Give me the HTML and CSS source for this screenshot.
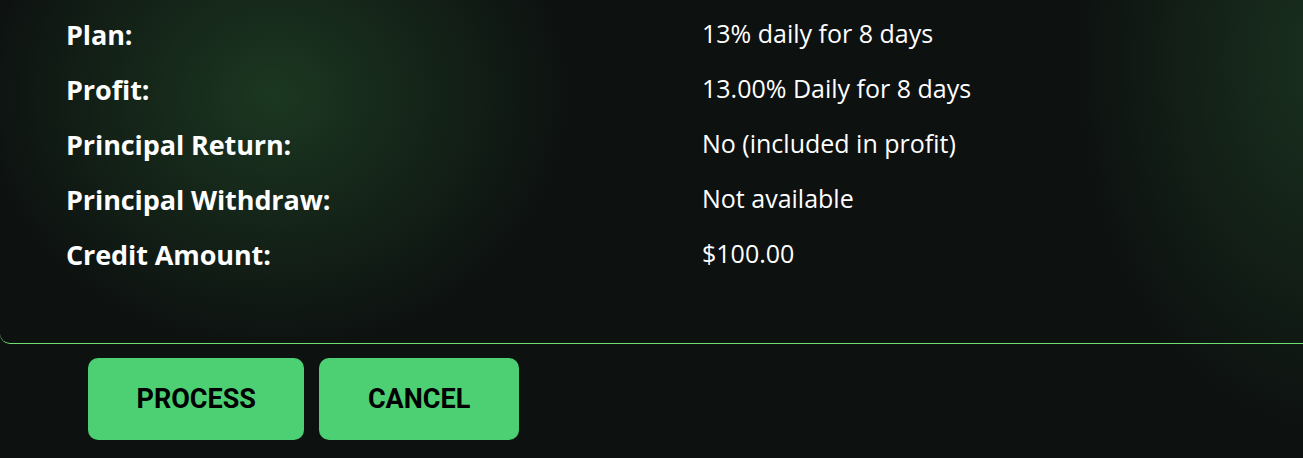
FILE: index.html
```html
<!DOCTYPE html>
<html>
<head>
    <meta charset="utf-8" />
    <title>Confirm Deposit</title>
    <link rel="stylesheet" href="styles.css">
</head>
<body>
<div class="confirm_card">
    <div class="confirm_row">
        <div class="confirm_label">Plan:</div>
        <div class="confirm_value">13% daily for 8 days</div>
    </div>
    <div class="confirm_row">
        <div class="confirm_label">Profit:</div>
        <div class="confirm_value">13.00% Daily for 8 days</div>
    </div>
    <div class="confirm_row">
        <div class="confirm_label">Principal Return:</div>
        <div class="confirm_value">No (included in profit)</div>
    </div>
    <div class="confirm_row">
        <div class="confirm_label">Principal Withdraw:</div>
        <div class="confirm_value">Not available</div>
    </div>
    <div class="confirm_row">
        <div class="confirm_label">Credit Amount:</div>
        <div class="confirm_value">$100.00</div>
    </div>
</div>

<div class="confirm_actions">
    <button class="btn_green" type="button">Process</button>
    <button class="btn_green" type="button">Cancel</button>
</div>
</body>
</html>
```

FILE: styles.css
```css
html {
    background: #0d1110;
}

body {
    margin: 0;
    min-height: 458px;
    color: #fff;
    font-family: "Open Sans", "Noto Sans", sans-serif;
    background:
        radial-gradient(ellipse 260px 380px at 1330px 60px, rgba(30, 60, 36, 0.75), rgba(30, 60, 36, 0) 100%),
        #0d1110;
    overflow: hidden;
}

.confirm_card {
    box-sizing: border-box;
    width: 100%;
    padding: 6px 0 62px 66px;
    border-bottom: 1px solid #6ee070;
    border-bottom-left-radius: 10px;
    background: radial-gradient(ellipse 300px 260px at 275px 95px, rgba(30, 62, 36, 0.85), rgba(30, 62, 36, 0) 100%);
}

.confirm_row {
    display: grid;
    grid-template-columns: 636px 1fr;
    height: 55px;
    align-items: center;
}

.confirm_label {
    font-size: 27px;
    font-weight: 700;
    letter-spacing: -0.1px;
    padding-top: 2px;
}

.confirm_value {
    font-size: 25px;
    padding-bottom: 2px;
}

.confirm_actions {
    display: flex;
    gap: 15px;
    padding: 14px 0 0 88px;
}

.btn_green {
    background: #4dd073;
    color: #000;
    border: none;
    border-radius: 10px;
    height: 82px;
    padding: 0 48.5px;
    font-family: Roboto, "Liberation Sans", sans-serif;
    font-size: 27px;
    font-weight: 700;
    text-transform: uppercase;
}
```
